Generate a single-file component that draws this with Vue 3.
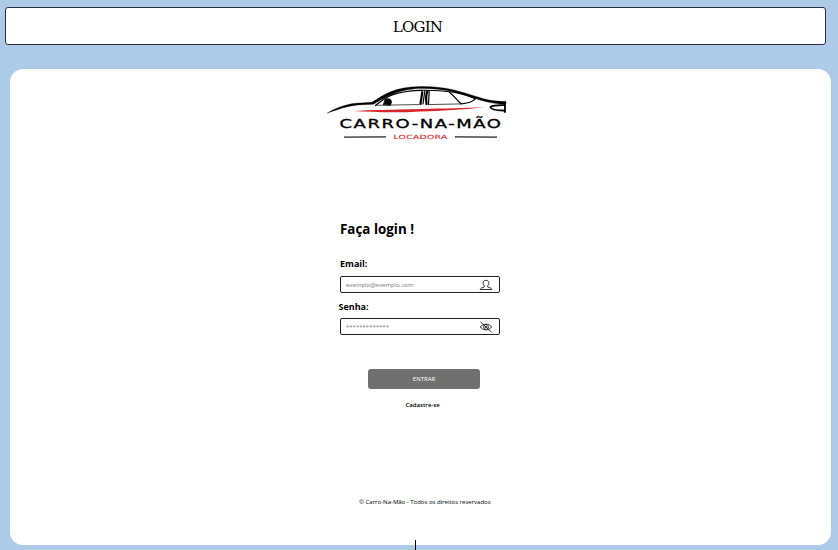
<script setup>
import { ref } from 'vue'

const email = ref('')
const password = ref('')
</script>

<template>
  <div class="page">
    <header class="bar"><h1>LOGIN</h1></header>
    <main class="card">
      <svg class="logo" viewBox="326 82 184 62" role="img" aria-label="Carro-Na-Mão Locadora">
        <g fill="none" stroke="#000" stroke-linecap="round" stroke-linejoin="round">
          <path fill="#000" stroke-width=".3" d="M327.5 113C336 107.500 349 103.200 360 103L372 102.300C384 94.500 395 86.800 420 86.500C446 86 462 92 479 97.300C487 100 494 101.200 506 101.600V104H500C490 102.800 482 101 474 98.300C455 91.800 444 88.700 423 88.600C400 88.800 389 95.300 373.500 104.300L358 104.900C347 106 338 109.200 327.500 113Z" />
          <path stroke-width="1.200" d="M375.500 105.500C386 97 393 91.500 420 90.300C440 90 459 91 475.500 98.700C473 101.500 468 103.500 461 103.800" />
          <path stroke-width=".7" d="M376 105.300L419 104.600M428 104.600L461 103.900" />
          <path stroke-width="1.200" d="M449.500 92.500C454 95 456 100 461 103.500" />
          <path stroke-width="2.200" d="M422.300 92L420.500 104M427.300 91.500C425.500 96 426 100 426.500 104" />
          <path stroke-width="1.200" d="M424.800 91L423 104M429.200 91L428.500 104" />
          <path fill="#000" stroke-width=".8" d="M383.500 104.500L385 99.500C388 97.800 391.500 99 391.500 102L390.500 105Z" />
          <path stroke-width="1.800" d="M505 102.500V112M504 105.200C499 105 493 105.500 490.300 107C491 109 494 110.500 503.500 110.500" />
        </g>
        <path fill="#d8262d" d="M353 111C370 109.500 390 110 420 108.900C445 108.500 465 107.900 484 107.200C462 109.700 442 110.900 420 111.400C396 113 374 112 353 111Z" />
        <text class="brand" x="339.500" y="128.300" textLength="163" lengthAdjust="spacingAndGlyphs">CARRO-NA-MÃO</text>
        <path stroke="#222" stroke-width="1.200" d="M344 137.200L386 136.800M455 136.800L497 137.200" />
        <text class="sub" x="393.500" y="139" textLength="54" lengthAdjust="spacingAndGlyphs">LOCADORA</text>
      </svg>

      <form class="form" @submit.prevent>
        <h2>Faça login !</h2>
        <label class="label" for="email">Email:</label>
        <div class="field first">
          <input id="email" v-model="email" type="email" placeholder="exemplo@exemplo.com">
          <svg class="icon" viewBox="0 0 14 12">
            <path d="M1.200 10.500H12.800C12.500 8.900 10.500 8.700 8.700 8V6.700C10.800 4.800 10.200 1.300 7 1.300S3.200 4.800 5.300 6.700V8C3.500 8.700 1.500 8.900 1.200 10.500Z" />
          </svg>
        </div>
        <label class="label second" for="password">Senha:</label>
        <div class="field">
          <input id="password" v-model="password" type="password" placeholder="*************">
          <svg class="icon" viewBox="0 0 14 12">
            <path d="M1.300 6C4 2.200 10 2.200 12.700 6C10 9.800 4 9.800 1.300 6ZM1.500 .8L12.500 11.200" />
            <circle cx="7" cy="6" r="2.400" />
            <circle cx="7" cy="6" r=".7" />
          </svg>
        </div>
        <button type="submit">ENTRAR</button>
        <a class="signup">Cadastre-se</a>
      </form>

      <footer>© Carro-Na-Mão - Todos os direitos reservados</footer>
      <span class="tick"></span>
    </main>
  </div>
</template>

<style>
body {
  background: #adcbe9;
  overflow: hidden;
}
</style>

<style scoped>
.page {
  box-sizing: border-box;
  height: 550px;
  padding: 7px 7px 5px 5px;
  display: flex;
  flex-direction: column;
  gap: 24px;
  font-family: "Open Sans", sans-serif;
  color: #000;
}
.bar {
  box-sizing: border-box;
  width: 821px;
  height: 38px;
  border: 1px solid #26323e;
  border-radius: 3px;
  background: #fff;
  display: flex;
  align-items: center;
  justify-content: center;
}
h1 {
  margin: 1px 0 0 4px;
  font: 400 15px/20px "DejaVu Serif", serif;
  letter-spacing: -0.8px;
}
.card {
  position: relative;
  box-sizing: border-box;
  margin-left: 5px;
  width: 821px;
  height: 476px;
  padding: 13px 0 0 316px;
  border-radius: 13px;
  background: #fff;
  display: flex;
  flex-direction: column;
  align-items: flex-start;
}
.logo {
  width: 184px;
  height: 62px;
  flex: none;
}
.brand {
  font: 400 11.5px "DejaVu Sans", sans-serif;
  letter-spacing: 1px;
  fill: #000;
  stroke: #000;
  stroke-width: 0.3px;
}
.sub {
  font: 400 5.8px "DejaVu Sans", sans-serif;
  letter-spacing: 0.2px;
  fill: #d8262d;
  stroke: #d8262d;
  stroke-width: 0.1px;
}
.form {
  width: 160px;
  margin: 75px 0 0 14px;
  display: flex;
  flex-direction: column;
}
h2 {
  margin: 0;
  font-size: 13.4px;
  line-height: 20px;
  font-weight: 700;
}
.label {
  margin-top: 18px;
  font-size: 9px;
  line-height: 14px;
  font-weight: 700;
}
.label.second {
  margin: 7px 0 0 -1.5px;
}
.field {
  box-sizing: border-box;
  height: 17px;
  margin-top: 4px;
  padding: 0 6px 0 5px;
  border: 1px solid #222;
  border-radius: 2px;
  display: flex;
  align-items: center;
}
.field.first {
  margin-top: 5px;
}
input {
  flex: 1;
  min-width: 0;
  padding: 0;
  border: 0;
  outline: 0;
  background: none;
  font: 400 6px/12px "Open Sans", sans-serif;
}
input::placeholder {
  color: #777;
  opacity: 1;
}
.icon {
  width: 14px;
  height: 12px;
  fill: none;
  stroke: #222;
  stroke-width: 0.9;
}
button {
  width: 112px;
  height: 20px;
  margin: 34px 0 0 28px;
  padding: 0;
  border: 0;
  border-radius: 3px;
  background: #707070;
  color: #fff;
  font: 400 6px/20px "Open Sans", sans-serif;
}
.signup {
  margin: 11px 0 0 65.5px;
  font-size: 6px;
  line-height: 10px;
  font-weight: 600;
}
footer {
  margin: 87px 0 0 33px;
  font-size: 6px;
  line-height: 10px;
}
.tick {
  position: absolute;
  left: 405px;
  bottom: -5px;
  width: 1px;
  height: 10px;
  background: #000;
}
</style>
